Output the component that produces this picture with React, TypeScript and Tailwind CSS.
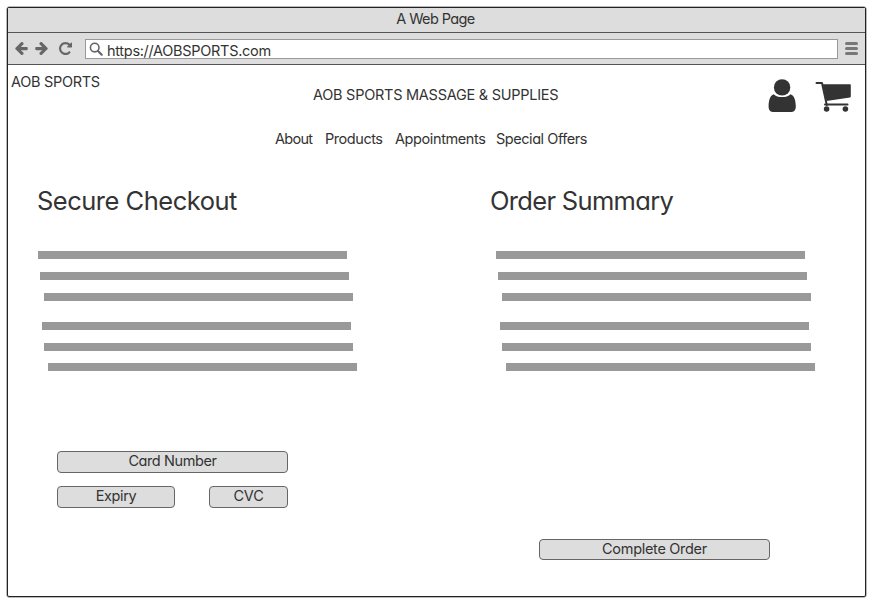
import type { ReactNode } from "react";

function BackIcon({ className }: { className: string }) {
  return (
    <svg className={"h-[13px] w-[13px] shrink-0 " + className} viewBox="32 192 1536 1536" fill="#666">
      <path d="M1536 896v128q0 53-32.5 90.5t-84.5 37.5h-704l293 294q38 36 38 90t-38 90l-75 76q-37 37-90 37-52 0-91-37l-651-652q-37-37-37-90 0-52 37-91l651-650q38-38 91-38 52 0 90 38l75 74q38 38 38 91t-38 91l-293 293h704q52 0 84.5 37.5t32.5 90.5z" />
    </svg>
  );
}

function ReloadIcon() {
  return (
    <svg className="ml-[11px] h-[13px] w-[13px] shrink-0" viewBox="0 128 1536 1536" fill="#666">
      <path d="M1536 256v448q0 26-19 45t-45 19h-448q-42 0-59-40-17-39 14-69l138-138q-148-137-349-137-104 0-198.5 40.5t-163.5 109.5-109.5 163.5-40.5 198.5 40.5 198.5 109.5 163.5 163.5 109.5 198.5 40.5q119 0 225-52t179-147q7-10 23-12 15 0 25 9l137 138q9 8 9.5 20.5t-7.5 22.5q-109 132-264 204.5t-327 72.5q-156 0-298-61t-245-164-164-245-61-298 61-298 164-245 245-164 298-61q147 0 284.5 55.5t244.5 156.5l130-129q29-31 70-14 39 17 39 59z" />
    </svg>
  );
}

function SearchIcon() {
  return (
    <svg className="mt-[2px] ml-[3px] h-[14px] w-[14px] shrink-0" viewBox="0 0 14 14" fill="none" stroke="#666">
      <circle cx="5.7" cy="5.6" r="4.3" strokeWidth="1.6" />
      <path d="M9 9L12.7 12.7" strokeWidth="2.2" strokeLinecap="round" />
    </svg>
  );
}

function UserIcon() {
  return (
    <svg className="h-[34px] w-[28px]" viewBox="0 0 28 34" fill="#333">
      <circle cx="14.1" cy="8.4" r="8.2" />
      <path d="M5.6 15.2C2.2 16.4.6 21.5.6 27.4C.6 31.2 2.6 33.1 6 33.1H22.4C25.8 33.1 27.8 31.2 27.8 27.4C27.8 21.5 26.2 16.4 22.6 15.2C20.6 17.1 17.6 18.1 14.1 18.1C10.6 18.1 7.6 17.1 5.6 15.2Z" />
    </svg>
  );
}

function CartIcon() {
  return (
    <svg className="ml-[19px] h-[34px] w-[37px]" viewBox="0 0 37 34" fill="#333">
      <path d="M1.5 4H7L11.8 26" fill="none" stroke="#333" strokeWidth="2" strokeLinecap="round" strokeLinejoin="round" />
      <path d="M7.7 5.3H35.2Q35.8 5.3 35.8 6V17.5Q35.8 18.3 35 18.4L11.5 22Z" />
      <path d="M10 25.5H32.5" stroke="#333" strokeWidth="2" strokeLinecap="round" />
      <circle cx="11.6" cy="30" r="2.8" />
      <circle cx="30.4" cy="30" r="2.8" />
    </svg>
  );
}

function TextLines() {
  return (
    <div className="flex flex-col">
      <div className="h-[8px] w-[309px] bg-[#999999]" />
      <div className="mt-[13px] ml-[2px] h-[8px] w-[309px] bg-[#999999]" />
      <div className="mt-[13px] ml-[6px] h-[8px] w-[309px] bg-[#999999]" />
      <div className="mt-[21px] ml-[4px] h-[8px] w-[309px] bg-[#999999]" />
      <div className="mt-[13px] ml-[6px] h-[8px] w-[309px] bg-[#999999]" />
      <div className="mt-[12px] ml-[10px] h-[8px] w-[309px] bg-[#999999]" />
    </div>
  );
}

function Button({ className, children }: { className: string; children: ReactNode }) {
  return (
    <button
      className={
        "flex items-start justify-center rounded-[4px] border border-[#666] bg-[#dddddd] leading-[18px] whitespace-nowrap " +
        className
      }
    >
      {children}
    </button>
  );
}

export default function App() {
  return (
    <div className="h-[605px] w-[873px] bg-white pt-[7px] pl-[7px] font-['Inter',sans-serif] text-[14.5px] leading-5 text-[#333] [font-feature-settings:'cv11']">
      <div className="flex h-[590px] w-[859px] flex-col rounded-[2px] border border-[#222] shadow-[0_0_0_0.5px_#777]">
        <header className="bg-[#dddddd]">
          <div className="h-[25px] border-b border-[#555] pr-[2px] text-center leading-[22px] tracking-[-0.6px]">A Web Page</div>
          <div className="flex h-8 items-center border-b border-[#555]">
            <BackIcon className="ml-[7px]" />
            <BackIcon className="ml-[7px] rotate-180" />
            <ReloadIcon />
            <div className="ml-[13px] flex h-[20px] w-[753px] items-start border border-[#999] bg-white">
              <SearchIcon />
              <span className="ml-[4px] leading-[21px] tracking-[-0.3px]">https://AOBSPORTS.com</span>
            </div>
            <div className="ml-[7px] flex flex-col gap-[2px]">
              <div className="h-[3px] w-[13px] rounded-full bg-[#777]" />
              <div className="h-[3px] w-[13px] rounded-full bg-[#777]" />
              <div className="h-[3px] w-[13px] rounded-full bg-[#777]" />
            </div>
          </div>
        </header>

        <div className="flex h-12 items-start">
          <p className="mt-[7px] ml-[3px] w-[302px] tracking-[-0.3px]">AOB SPORTS</p>
          <p className="mt-[20px] w-[447px] tracking-[-0.26px]">AOB SPORTS MASSAGE &amp; SUPPLIES</p>
          <div className="mt-[14px] ml-[8px] flex">
            <UserIcon />
            <CartIcon />
          </div>
        </div>

        <nav className="mt-4 flex pl-[267px]">
          <a className="w-[50px] tracking-[-0.7px]">About</a>
          <a className="w-[70px] tracking-[-0.45px]">Products</a>
          <a className="w-[101px] tracking-[-0.4px]">Appointments</a>
          <a className="tracking-[-0.45px] whitespace-nowrap">Special Offers</a>
        </nav>

        <main className="mt-9 flex">
          <section className="w-[453px] pl-[29px]">
            <h1 className="text-[25.5px] leading-8 tracking-[-0.5px]">Secure Checkout</h1>
            <div className="mt-[34px] pl-[1px]">
              <TextLines />
            </div>
            <div className="mt-20 ml-[20px] flex w-[231px] flex-wrap justify-between gap-y-[13px]">
              <Button className="h-[22px] w-[231px] tracking-[-0.4px]">Card Number</Button>
              <Button className="h-[22px] w-[118px] tracking-[-0.4px]">Expiry</Button>
              <Button className="h-[22px] w-[79px] tracking-[-0.2px]">CVC</Button>
            </div>
          </section>
          <section className="pl-[29px]">
            <h1 className="text-[25.5px] leading-8 tracking-[-0.68px]">Order Summary</h1>
            <div className="mt-[34px] pl-[6px]">
              <TextLines />
            </div>
            <Button className="mt-[168px] ml-[49px] h-[21px] w-[231px] tracking-[-0.3px]">Complete Order</Button>
          </section>
        </main>
      </div>
    </div>
  );
}
